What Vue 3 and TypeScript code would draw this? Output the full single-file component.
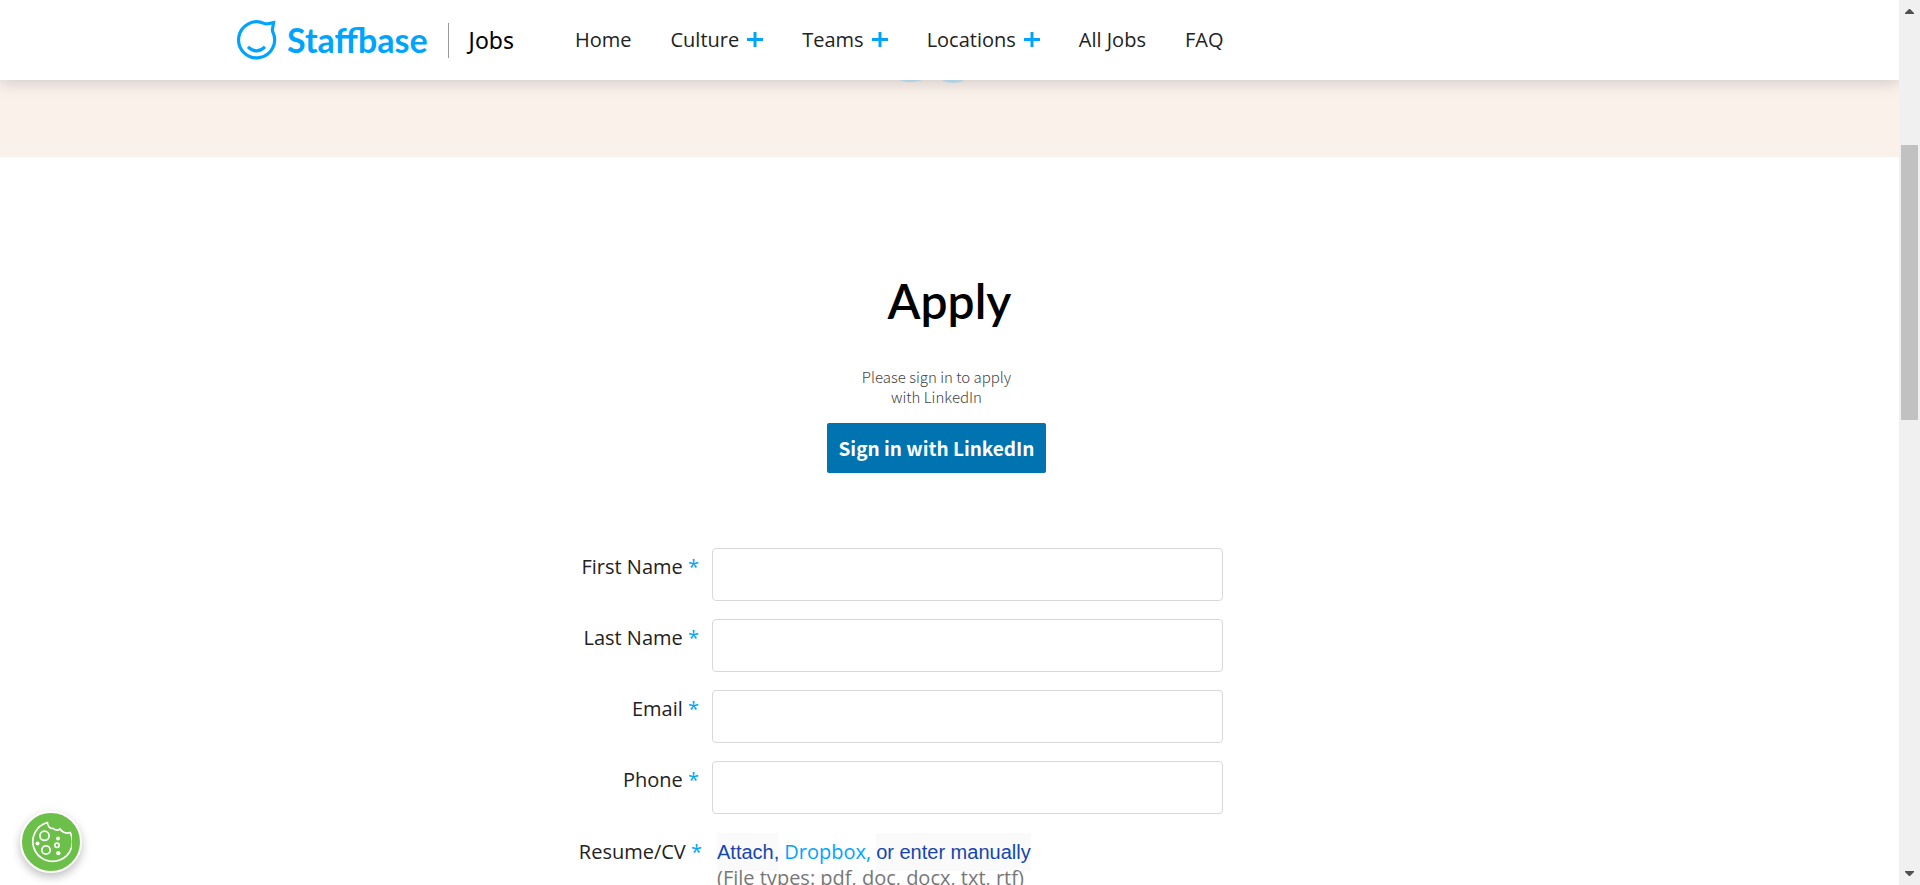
<script setup lang="ts">
import { reactive } from 'vue'

interface NavItem {
  label: string
  expandable: boolean
}

interface Field {
  id: 'firstName' | 'lastName' | 'email' | 'phone'
  label: string
  type: string
}

const nav: NavItem[] = [
  { label: 'Home', expandable: false },
  { label: 'Culture', expandable: true },
  { label: 'Teams', expandable: true },
  { label: 'Locations', expandable: true },
  { label: 'All Jobs', expandable: false },
  { label: 'FAQ', expandable: false },
]

const fields: Field[] = [
  { id: 'firstName', label: 'First Name', type: 'text' },
  { id: 'lastName', label: 'Last Name', type: 'text' },
  { id: 'email', label: 'Email', type: 'email' },
  { id: 'phone', label: 'Phone', type: 'tel' },
]

const form = reactive({ firstName: '', lastName: '', email: '', phone: '' })
</script>

<template>
  <div class="window">
    <div class="page">
      <header class="header">
        <div class="bar">
          <a class="brand" href="#">
            <svg class="mark" viewBox="0 0 40 40" fill="none" stroke="#00a4fd" aria-hidden="true">
              <path d="M27 3.4A18 18 0 1 0 36 12.4Q35 10.6 35.6 8.4L36.6 2.6L30.8 3.8Q28.6 4.2 27 3.4Z" stroke-width="3.2" />
              <path d="M11 26.8Q19.5 35 28 26.8" stroke-width="3.2" />
            </svg>
            <span class="wordmark">Staffbase</span>
          </a>
          <a class="section" href="#">Jobs</a>
          <nav class="nav">
            <a v-for="item in nav" :key="item.label" href="#">
              {{ item.label }}
              <svg v-if="item.expandable" class="plus" viewBox="0 0 16 16" aria-hidden="true">
                <path d="M0 7.5H16M8 0V15" stroke="#00a4fd" stroke-width="3" />
              </svg>
            </a>
          </nav>
        </div>
      </header>

      <section class="hero">
        <svg class="dots" viewBox="0 0 64 4" aria-hidden="true">
          <ellipse cx="11" cy="-2" rx="13" ry="4" />
          <ellipse cx="53" cy="-2" rx="12" ry="5" />
        </svg>
      </section>

      <main class="main">
        <h1>Apply</h1>
        <div class="linkedin">
          <p>Please sign in to apply<br />with LinkedIn</p>
          <button type="button">Sign in with LinkedIn</button>
        </div>

        <form class="form" @submit.prevent>
          <div v-for="field in fields" :key="field.id" class="row">
            <label :for="field.id">{{ field.label }} <span class="star">*</span></label>
            <input :id="field.id" v-model="form[field.id]" :type="field.type" required />
          </div>
          <div class="row resume" role="group" aria-labelledby="resume">
            <span id="resume" class="caption">Resume/CV <span class="star">*</span></span>
            <div class="upload">
              <div class="choices">
                <button type="button">Attach,</button>
                <a href="#">Dropbox,</a>
                <button type="button">or enter manually</button>
              </div>
              <div class="types">(File types: pdf, doc, docx, txt, rtf)</div>
            </div>
          </div>
        </form>
      </main>

      <button class="cookie" type="button" aria-label="Cookie settings">
        <svg viewBox="0 0 42 42" fill="none" stroke="#fff" stroke-width="1.7" aria-hidden="true">
          <path d="M17.4 1.5A19.8 19.8 0 1 0 40.2 11.5Q34 13.5 30 8Q26.5 10.5 23.5 7.6Q18 7.5 17.4 1.5Z" />
          <circle cx="14.5" cy="14.8" r="4.6" />
          <circle cx="16" cy="29" r="4.2" />
          <circle cx="27" cy="24.3" r="2.2" />
          <g fill="#fff" stroke="none">
            <circle cx="28" cy="17.5" r="1.9" />
            <circle cx="7.5" cy="22.5" r="2" />
            <circle cx="28.3" cy="32.2" r="2.1" />
          </g>
        </svg>
      </button>
    </div>

    <div class="scrollbar" aria-hidden="true">
      <svg viewBox="0 0 9 5"><path d="M4 0H5L9 4V5H0V4Z" /></svg>
      <div class="track"><div class="thumb"></div></div>
      <svg viewBox="0 0 9 5"><path d="M0 0H9V1L5 5H4L0 1Z" /></svg>
    </div>
  </div>
</template>

<style>
body {
  margin: 0;
  overflow: hidden;
}
</style>

<style scoped>
* {
  box-sizing: border-box;
}

.window {
  display: grid;
  grid-template-columns: minmax(0, 1fr) 21px;
  height: 100vh;
  overflow: hidden;
  background: #fff;
  color: #222;
  font: 400 20px/26px 'Open Sans', sans-serif;
}

.page {
  position: relative;
  min-height: 0;
  overflow: hidden;
}

.header {
  position: relative;
  z-index: 1;
  height: 80px;
  background: #fff;
  box-shadow: 0 2px 16px rgba(0, 0, 0, 0.18);
}

.bar {
  display: flex;
  align-items: center;
  max-width: 1425px;
  height: 100%;
  margin: 0 auto;
}

a {
  color: inherit;
  text-decoration: none;
}

button {
  border: 0;
  cursor: pointer;
}

.brand {
  display: flex;
  align-items: center;
  gap: 10px;
  color: #00a4fd;
}

.mark {
  width: 40px;
  height: 40px;
}

.wordmark {
  font: 700 34px/40px Lato, sans-serif;
}

.section {
  margin-left: 20px;
  padding-left: 20px;
  border-left: 1px solid #999;
  color: #000;
  font: 400 23px/35px 'Noto Sans', sans-serif;
}

.nav {
  display: flex;
  gap: 39px;
  margin-left: 61px;
}

.nav a {
  display: flex;
  align-items: center;
  gap: 8px;
}

.plus {
  width: 16px;
  height: 16px;
}

.hero {
  display: flex;
  justify-content: center;
  align-items: flex-start;
  height: 77px;
  padding-right: 36px;
  background: #faf1eb;
}

.dots {
  width: 64px;
  height: 4px;
  fill: #c4e7fa;
}

.main {
  padding: 116px 24px 0;
}

h1 {
  margin: 0;
  text-align: center;
  color: #000;
  font: 600 48px/56px Lato, sans-serif;
}

.linkedin {
  display: flex;
  flex-direction: column;
  align-items: center;
  padding: 38px 26px 0 0;
}

.linkedin p {
  margin: 0 0 16px;
  text-align: center;
  color: #444;
  font: 300 15px/20px 'Noto Sans CJK SC', sans-serif;
}

.linkedin button {
  width: 219px;
  height: 50px;
  padding: 0;
  border-radius: 2px;
  background: #0073b1;
  color: #fff;
  font: 700 19px/50px 'Noto Sans CJK SC', sans-serif;
}

.form {
  display: flex;
  flex-direction: column;
  gap: 18px;
  max-width: 747px;
  margin: 75px auto 0;
}

.row {
  display: grid;
  grid-template-columns: 123px minmax(0, 511px);
  gap: 13px;
}

.row label,
.caption {
  padding-top: 6px;
  text-align: right;
  white-space: nowrap;
}

.star {
  color: #00a4fd;
}

.row input {
  width: 100%;
  height: 53px;
  padding: 0 12px;
  border: 1px solid #d8d8d8;
  border-radius: 4px;
  background: #fff;
  color: inherit;
  font: inherit;
}

.resume {
  grid-template-columns: 126px minmax(0, 511px);
  gap: 15px;
  margin-top: 1px;
}

.choices {
  display: flex;
  align-items: center;
  gap: 5px;
}

.choices button {
  height: 38px;
  padding: 0;
  background: #fafafa;
  color: #1546b0;
  font: 400 20px/38px 'Liberation Sans', Arial, sans-serif;
}

.choices a {
  color: #00a4fd;
}

.types {
  margin-top: -6px;
  line-height: 26px;
  color: #777;
}

.cookie {
  position: absolute;
  bottom: 12px;
  left: 20px;
  display: grid;
  place-items: center;
  width: 62px;
  height: 62px;
  padding: 0;
  border: 2px solid #fff;
  border-radius: 50%;
  background: #6cc04a;
  box-shadow: 0 4px 10px rgba(0, 0, 0, 0.25);
}

.cookie svg {
  width: 42px;
  height: 42px;
}

.scrollbar {
  display: flex;
  flex-direction: column;
  align-items: center;
  padding: 9px 2px;
  background: #f0f0f0;
}

.scrollbar svg {
  width: 9px;
  height: 5px;
  fill: #505050;
}

.track {
  flex: 1;
  width: 17px;
  padding-top: 131px;
}

.thumb {
  height: 275px;
  background: #c1c1c1;
}
</style>
